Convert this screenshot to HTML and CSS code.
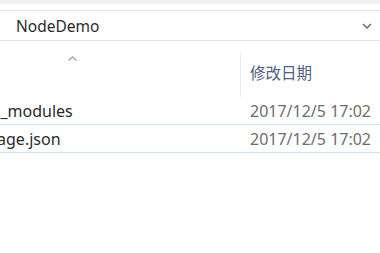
FILE: index.html
```html
<!DOCTYPE html>
<html lang="zh-CN">
<head>
    <meta charset="UTF-8">
    <title>NodeDemo</title>
    <link rel="stylesheet" href="styles.css">
</head>
<body>
    <div class="window">
        <div class="top-band"></div>
        <div class="address-bar">
            <span class="crumb-sep">›</span>
            <span class="crumb">NodeDemo</span>
            <svg class="dropdown" width="10" height="6" viewBox="0 0 10 6">
                <path d="M1 1 L5 5 L9 1" fill="none" stroke="#6d6d6d" stroke-width="1.5"/>
            </svg>
        </div>
        <div class="header">
            <div class="col-name">
                <svg class="sort" width="9" height="5" viewBox="0 0 9 5">
                    <path d="M0.5 4.5 L4.5 0.8 L8.5 4.5" fill="none" stroke="#a0a0a0" stroke-width="1.2"/>
                </svg>
            </div>
            <div class="col-date">修改日期</div>
        </div>
        <div class="list">
            <div class="row">
                <div class="name">node_modules</div>
                <div class="date">2017/12/5 17:02</div>
            </div>
            <div class="row selected">
                <div class="name">package.json</div>
                <div class="date">2017/12/5 17:02</div>
            </div>
        </div>
    </div>
</body>
</html>
```

FILE: styles.css
```css
:root {
    --border: #e3e3e3;
    --row-line: #cde6fb;
    --text: #2b2b2b;
    --muted: #6e6e6e;
    --header-text: #4d6082;
}
body {
    margin: 0;
    background: #ffffff;
    font-family: "Noto Sans", "Noto Sans CJK SC", sans-serif;
    overflow: hidden;
}
.window {
    width: 380px;
    height: 253px;
}
.top-band {
    height: 4px;
    background: #f0f0f0;
    margin-bottom: 6px;
}
.address-bar {
    display: flex;
    align-items: center;
    height: 29px;
    border-top: 1px solid var(--border);
    border-bottom: 1px solid var(--border);
    margin-left: -4px;
}
.crumb-sep {
    color: #888;
    font-size: 14px;
    width: 20px;
}
.crumb {
    font-size: 15.5px;
    color: var(--text);
    flex: 1;
}
.dropdown {
    margin-right: 8px;
}
.header {
    display: flex;
    height: 56px;
}
.col-name {
    width: 240px;
    border-right: 1px solid #ececec;
    margin: 12px 0 0;
    position: relative;
}
.sort {
    position: absolute;
    left: 68px;
    top: 3px;
}
.col-date {
    padding: 12px 0 0 9px;
    font-size: 15.5px;
    color: var(--header-text);
    line-height: 40px;
}
.list {
    margin-left: -38px;
}
.row {
    display: flex;
    align-items: center;
    height: 27px;
    border-bottom: 1px solid var(--row-line);
}
.name {
    width: 288px;
    font-size: 16px;
    color: var(--text);
}
.date {
    font-size: 16px;
    color: var(--muted);
}
```
